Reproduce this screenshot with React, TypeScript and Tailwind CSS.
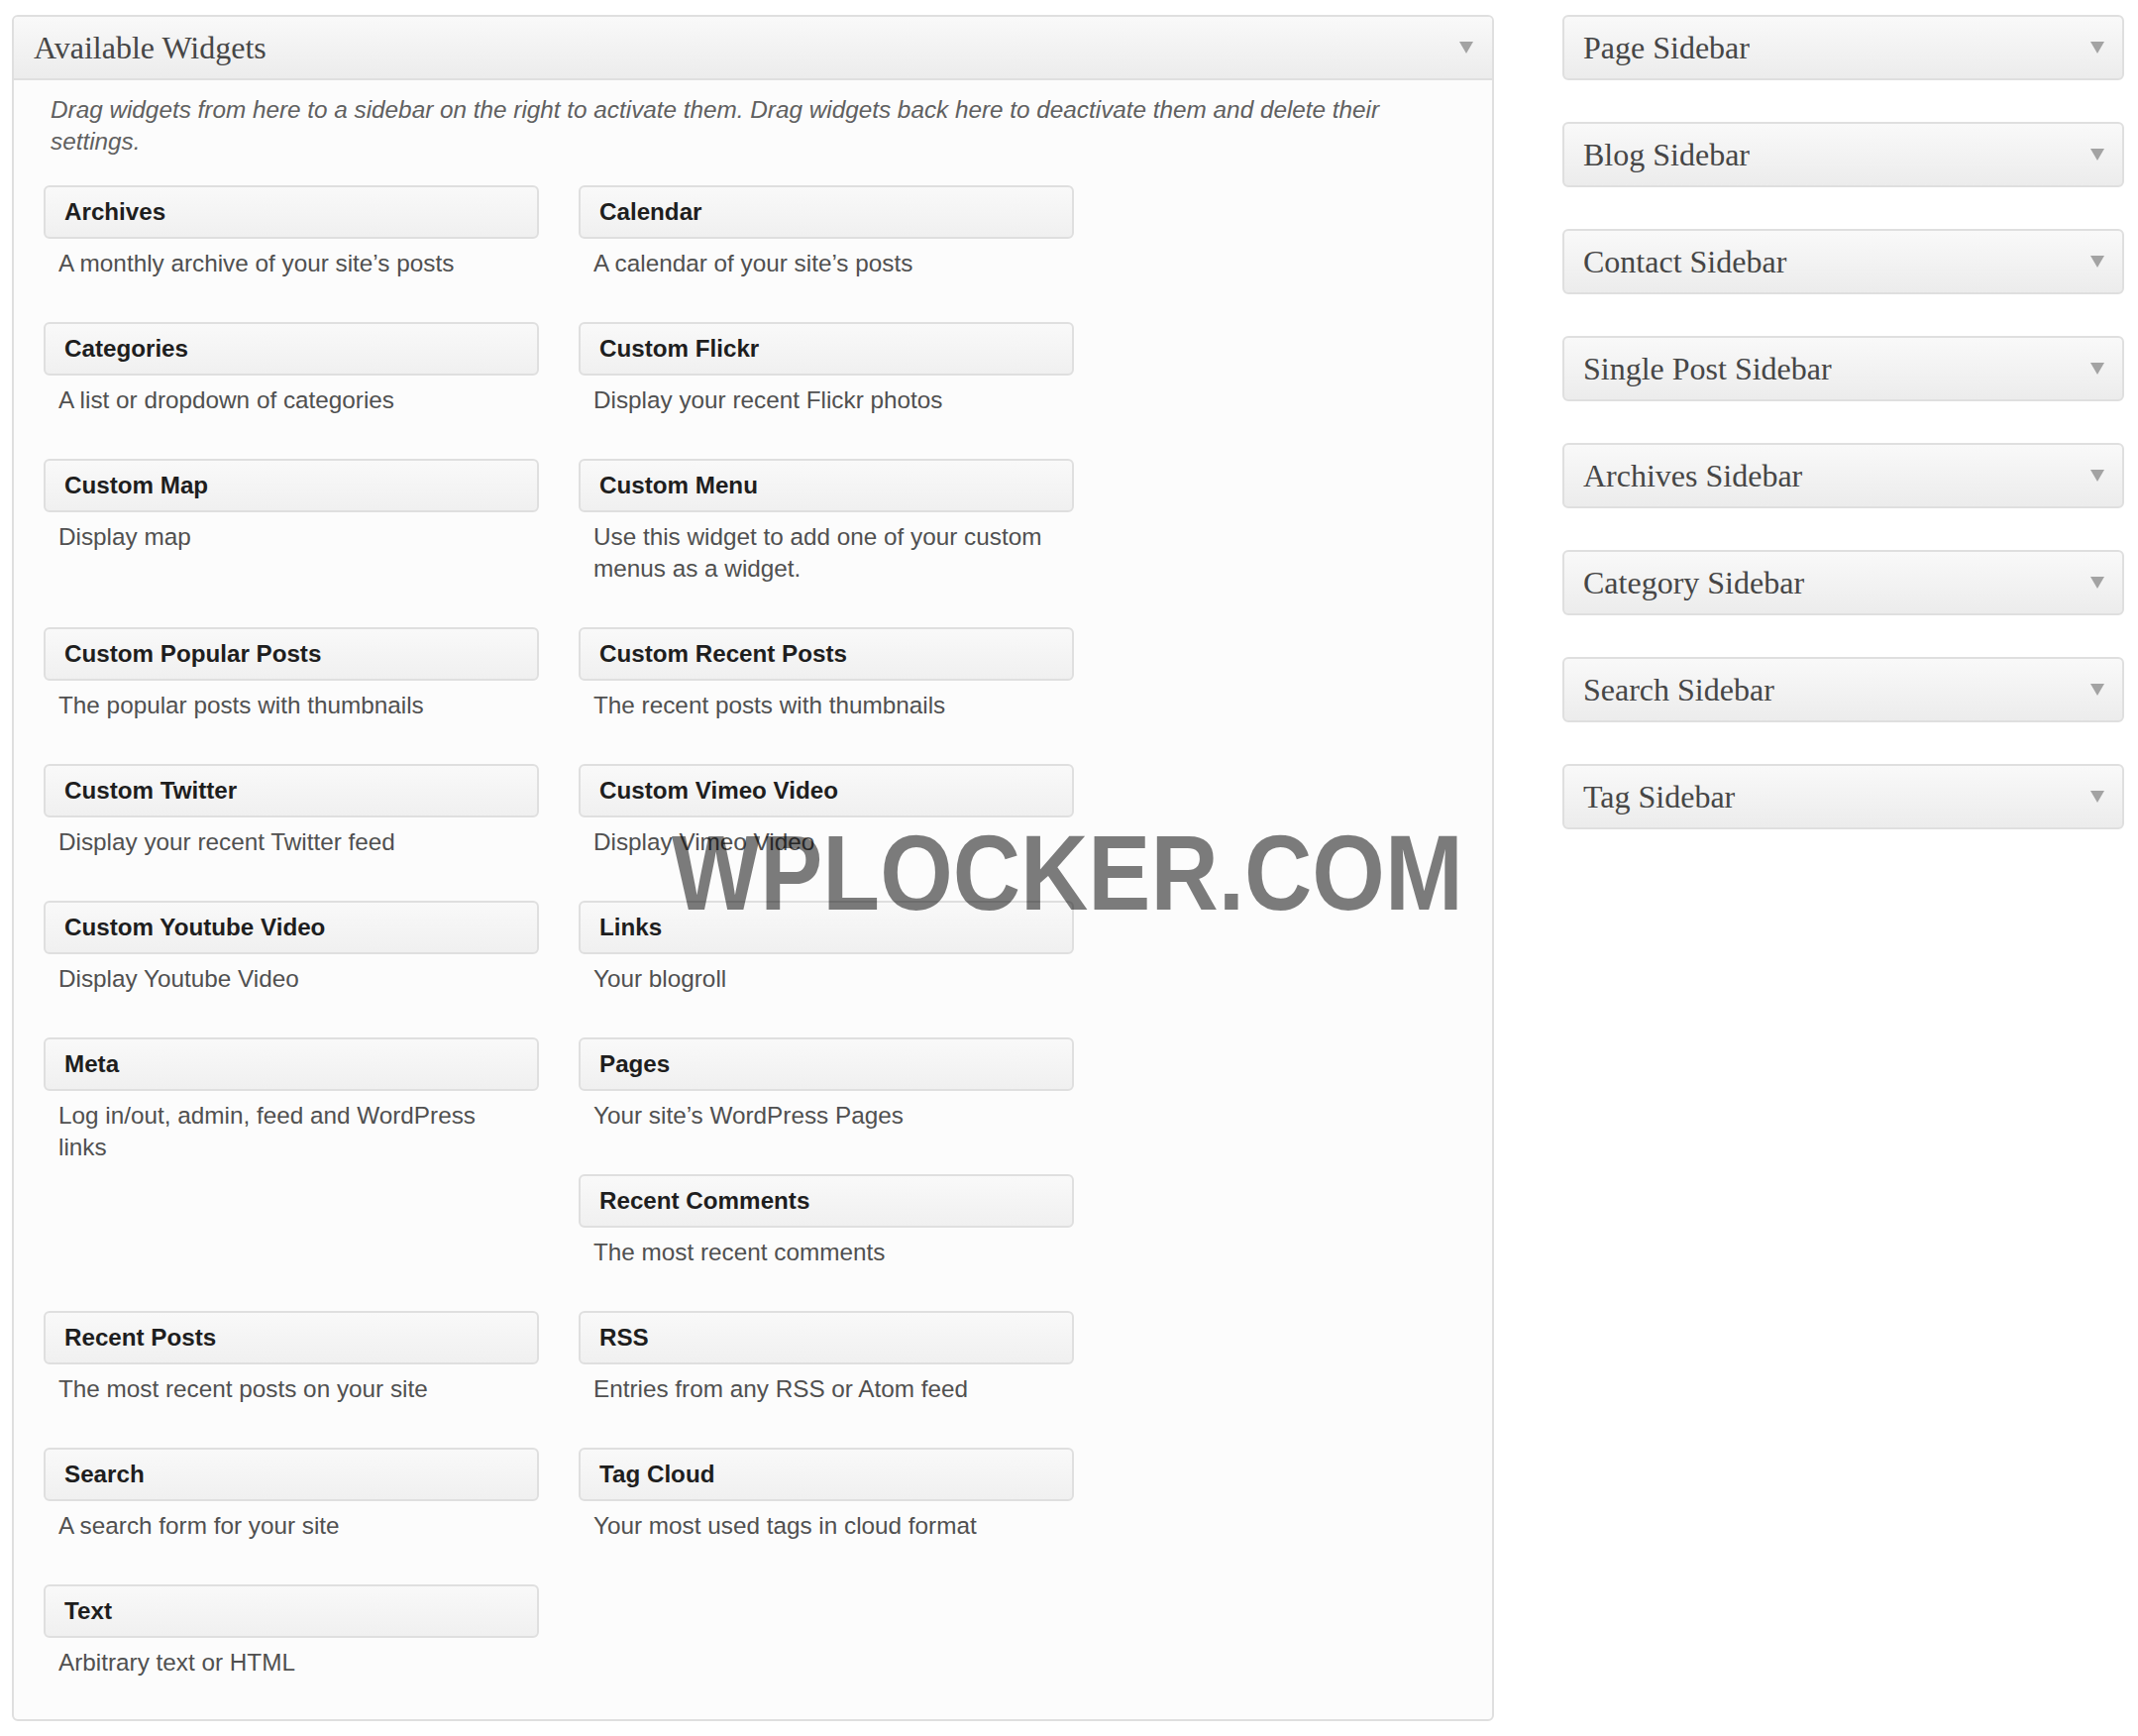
import React from "react";

type W = { title: string; desc: string };

const widgets: W[] = [
  { title: "Archives", desc: "A monthly archive of your site’s posts" },
  { title: "Calendar", desc: "A calendar of your site’s posts" },
  { title: "Categories", desc: "A list or dropdown of categories" },
  { title: "Custom Flickr", desc: "Display your recent Flickr photos" },
  { title: "Custom Map", desc: "Display map" },
  { title: "Custom Menu", desc: "Use this widget to add one of your custom menus as a widget." },
  { title: "Custom Popular Posts", desc: "The popular posts with thumbnails" },
  { title: "Custom Recent Posts", desc: "The recent posts with thumbnails" },
  { title: "Custom Twitter", desc: "Display your recent Twitter feed" },
  { title: "Custom Vimeo Video", desc: "Display Vimeo Video" },
  { title: "Custom Youtube Video", desc: "Display Youtube Video" },
  { title: "Links", desc: "Your blogroll" },
  { title: "Meta", desc: "Log in/out, admin, feed and WordPress links" },
  { title: "Pages", desc: "Your site’s WordPress Pages" },
  { title: "Recent Comments", desc: "The most recent comments" },
  { title: "Recent Posts", desc: "The most recent posts on your site" },
  { title: "RSS", desc: "Entries from any RSS or Atom feed" },
  { title: "Search", desc: "A search form for your site" },
  { title: "Tag Cloud", desc: "Your most used tags in cloud format" },
  { title: "Text", desc: "Arbitrary text or HTML" },
];

const sidebars = [
  "Page Sidebar",
  "Blog Sidebar",
  "Contact Sidebar",
  "Single Post Sidebar",
  "Archives Sidebar",
  "Category Sidebar",
  "Search Sidebar",
  "Tag Sidebar",
];

function Arrow() {
  return (
    <svg width="14" height="12" viewBox="0 0 14 12" className="shrink-0">
      <polygon points="0,0 14,0 7,12" fill="#a3a3a3" />
    </svg>
  );
}

export default function App() {
  return (
    <div className="min-h-[1752px] w-[2158px] bg-white relative font-['Liberation_Sans',Arial,sans-serif]">
      <div className="flex items-start pt-[15px] pl-[12px]">
        {/* Available widgets panel */}
        <div className="w-[1496px] border-2 border-[#dfdfdf] rounded-[6px] bg-[#fcfcfc] overflow-hidden">
          <div className="h-[64px] flex items-center justify-between pl-[20px] pr-[19px] border-b-2 border-[#dfdfdf] bg-linear-to-b from-[#f9f9f9] to-[#ececec]">
            <span className="font-['Liberation_Serif','Times_New_Roman',serif] text-[32px] text-[#464646] leading-none">
              Available Widgets
            </span>
            <Arrow />
          </div>
          <p className="pt-[14px] pl-[37px] pr-[40px] w-[1420px] italic text-[24.3px] leading-[32px] text-[#606060]">
            Drag widgets from here to a sidebar on the right to activate them. Drag widgets back here to deactivate them and delete their settings.
          </p>
          <div className="flow-root pl-[30px] pt-[28px] -mb-[2px]">
            {widgets.map((w) => (
              <div key={w.title} className="float-left w-[500px] mr-[40px] mb-[43px]">
                <div className="h-[54px] border-2 border-[#dfdfdf] rounded-[6px] bg-linear-to-b from-[#f9f9f9] to-[#f0f0f0] flex items-center pl-[19px] font-bold text-[24.2px] text-[#1e1e1e]">
                  {w.title}
                </div>
                <div className="mt-[9px] pl-[15px] w-[475px] text-[24.3px] leading-[32px] text-[#505050]">
                  {w.desc}
                </div>
              </div>
            ))}
          </div>
        </div>

        {/* Sidebars */}
        <div className="ml-[69px] w-[567px] flex flex-col gap-[42px]">
          {sidebars.map((s) => (
            <div
              key={s}
              className="h-[66px] border-2 border-[#dfdfdf] rounded-[6px] flex items-center justify-between pl-[19px] pr-[18px] bg-linear-to-b from-[#f9f9f9] to-[#ececec]"
            >
              <span className="font-['Liberation_Serif','Times_New_Roman',serif] text-[32px] text-[#464646] leading-none">
                {s}
              </span>
              <Arrow />
            </div>
          ))}
        </div>
      </div>

      {/* Watermark */}
      <div className="absolute left-[678px] top-[828px] origin-left scale-x-[0.884] text-[107px] leading-none font-bold text-black opacity-[0.51] whitespace-nowrap pointer-events-none font-['Liberation_Sans',Arial,sans-serif]">
        WPLOCKER.COM
      </div>
    </div>
  );
}
